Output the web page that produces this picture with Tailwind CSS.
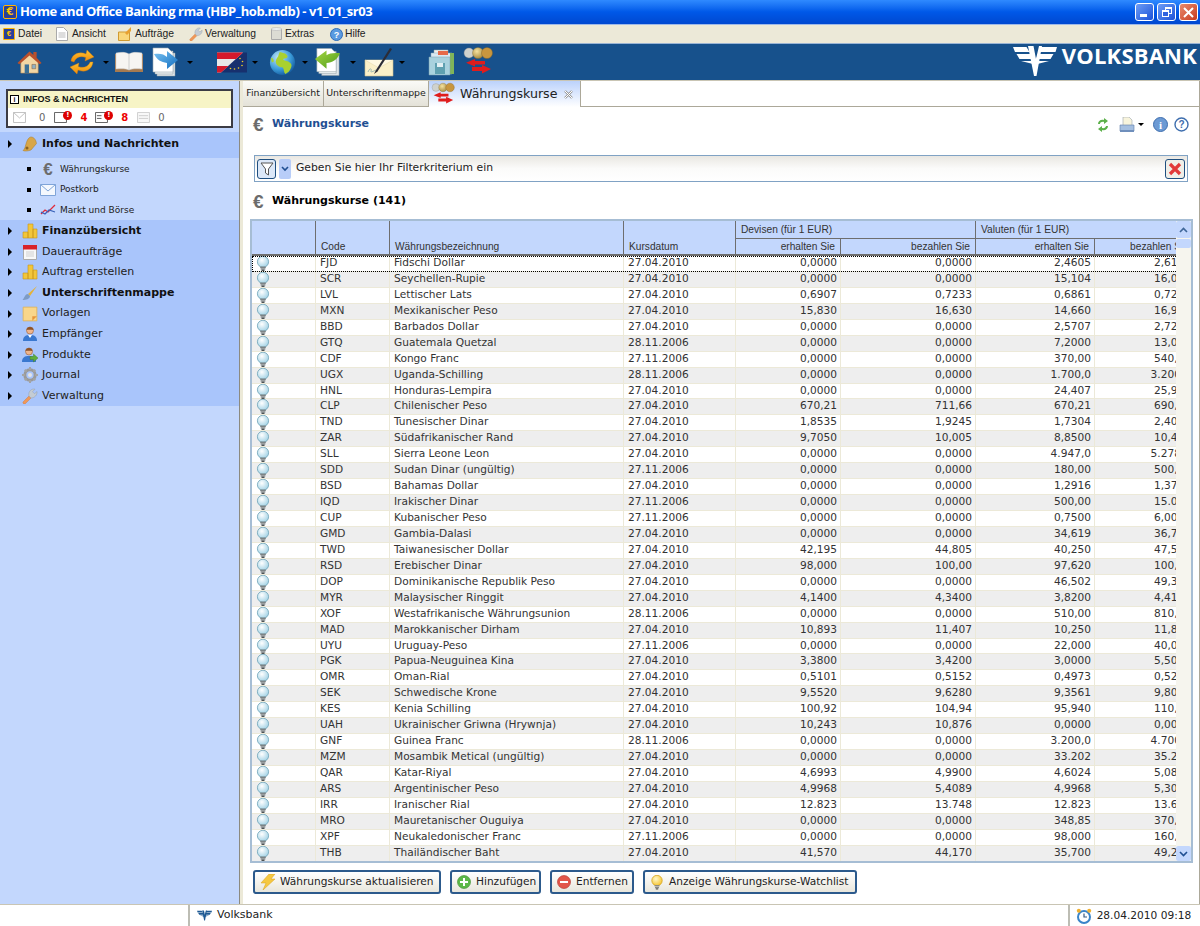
<!DOCTYPE html>
<html lang="de">
<head>
    <meta charset="UTF-8">
    <title>Home and Office Banking rma</title>
    <script src="https://cdn.jsdelivr.net/npm/@tailwindcss/browser@4"></script>
</head>
<body class="w-[1200px] h-[926px] overflow-hidden bg-white font-['DejaVu_Sans',sans-serif] text-[11px] text-[#222]">

    <!-- Icon sprites -->
    <svg class="absolute w-0 h-0" xmlns="http://www.w3.org/2000/svg">
        <defs>
            <linearGradient id="gOrange" x1="0" y1="0" x2="0" y2="1"><stop offset="0" stop-color="#ffc531"/><stop offset="1" stop-color="#ee8a0c"/></linearGradient>
            <linearGradient id="gBlue" x1="0" y1="0" x2="1" y2="1"><stop offset="0" stop-color="#7cc4f2"/><stop offset="1" stop-color="#0f6cc0"/></linearGradient>
            <linearGradient id="gGreen" x1="0" y1="0" x2="1" y2="1"><stop offset="0" stop-color="#a5d640"/><stop offset="1" stop-color="#4d9c1c"/></linearGradient>
            <radialGradient id="gGlobe" cx=".35" cy=".3" r=".8"><stop offset="0" stop-color="#c4e8f6"/><stop offset=".6" stop-color="#3a9ad8"/><stop offset="1" stop-color="#0e4f92"/></radialGradient>
            <radialGradient id="gBulb" cx=".4" cy=".35" r=".7"><stop offset="0" stop-color="#ffffff"/><stop offset="1" stop-color="#9ed0e4"/></radialGradient>
            <radialGradient id="gBulbY" cx=".4" cy=".35" r=".7"><stop offset="0" stop-color="#fff8c8"/><stop offset="1" stop-color="#f5c22a"/></radialGradient>
            <radialGradient id="gCoin" cx=".4" cy=".35" r=".7"><stop offset="0" stop-color="#f4e2a0"/><stop offset="1" stop-color="#a98a3c"/></radialGradient>
        </defs>
        <symbol id="i-bulb" viewBox="0 0 14 15">
            <circle cx="7" cy="5.800" r="5.600" fill="url(#gBulb)" stroke="#6fa3b8" stroke-width=".8"/>
            <path d="M4.200 10.500h5.600v1.600H4.200zM4.600 12.200h4.800v1.300H4.600z" fill="#7d8486"/><path d="M5.500 13.500h3V15h-3z" fill="#4d5254"/>
        </symbol>
        <symbol id="i-bulby" viewBox="0 0 14 15">
            <circle cx="7" cy="5.500" r="5.200" fill="url(#gBulbY)" stroke="#d6a520" stroke-width=".8"/>
            <path d="M4.600 10h4.800v1.600H4.600zM5 12h4v1.300H5z" fill="#8b8b86"/><path d="M5.800 13.300h2.400v1.200H5.800z" fill="#55554f"/>
        </symbol>
        <symbol id="i-house" viewBox="0 0 28 28">
            <path d="M5 13v12h18V13L14 5z" fill="#f2d6a4" stroke="#b88a52" stroke-width=".6"/>
            <path d="M1.500 14.500 14 2.500l4 3.600V3h3.400v6.200l5.100 5.300-2 1.300L14 6.800 3.500 15.800z" fill="#b8502c"/>
            <path d="M9 16h4.500v9H9z" fill="#3a6f96"/><path d="M16.500 16h4v4.500h-4z" fill="#8fb0c4" stroke="#80552e" stroke-width=".5"/>
        </symbol>
        <symbol id="i-sync" viewBox="0 0 28 28">
            <path d="M3 13C4 6 11 3 18 6l1-4 7 7-9 4 .8-3.500C13 7.500 8 9 6 14z" fill="url(#gOrange)" stroke="#d97a08" stroke-width=".4"/>
            <path d="M25 14c-1 8-8 11-15 8l-1 4-7-7 9-4-.8 3.500c5 2 10 .500 12-4.500z" fill="url(#gOrange)" stroke="#d97a08" stroke-width=".4"/>
        </symbol>
        <symbol id="i-book" viewBox="0 0 30 22">
            <path d="M1 3h28v18H1z" fill="#a67a50"/>
            <path d="M2 2c5-1 10-1 13 1v16c-3-1.500-8-1.500-13-1zM28 2c-5-1-10-1-13 1v16c3-1.500 8-1.500 13-1z" fill="#f7f5f2" stroke="#c9c9c9" stroke-width=".5"/>
        </symbol>
        <symbol id="i-docblue" viewBox="0 0 28 30">
            <path d="M5 6h18v23H5z" fill="#dfe6ea" stroke="#8d999f" stroke-width=".5"/><path d="M3 4h18v23H3z" fill="#eef2f4" stroke="#8d999f" stroke-width=".5"/>
            <path d="M1 1h15l5 5v19H1z" fill="#fff" stroke="#9aa8ae" stroke-width=".6"/>
            <path d="M2 7c6-1 10 0 13 3V4l11 9-11 9v-6c-6-1-10-3-13-9z" fill="url(#gBlue)"/>
        </symbol>
        <symbol id="i-docgreen" viewBox="0 0 28 30">
            <path d="M8 6h18v23H8z" fill="#dfe6ea" stroke="#8d999f" stroke-width=".5"/><path d="M5 4h18v23H5z" fill="#eef2f4" stroke="#8d999f" stroke-width=".5"/>
            <path d="M3 1h15l5 5v19H3z" fill="#fff" stroke="#9aa8ae" stroke-width=".6"/>
            <path d="M27 6c-6-1-11 0-14 2V3L1 12l12 10v-6c6 0 11-3 14-10z" fill="url(#gGreen)"/>
        </symbol>
        <symbol id="i-flag" viewBox="0 0 30 20">
            <path d="M0 0h30v20H0z" fill="#17306e"/>
            <path d="M0 0h26L4 20H0z" fill="#e8e8e8"/><path d="M0 0h26l-7 6.500H0zM0 13.500h11.500L4 20H0z" fill="#d41a2c"/>
            <g fill="#f2d024"><circle cx="23" cy="6" r=".8"/><circle cx="25.500" cy="9" r=".8"/><circle cx="25" cy="13" r=".8"/><circle cx="21.500" cy="15.500" r=".8"/><circle cx="17.500" cy="16.500" r=".8"/><circle cx="13.500" cy="16" r=".8"/></g>
        </symbol>
        <symbol id="i-globe" viewBox="0 0 28 28">
            <circle cx="14" cy="14" r="13" fill="url(#gGlobe)"/>
            <path d="M11 3c3 1 7 1 8 4 1 2-2 3-4 3-1 2 3 2 5 3 3 2 4 3 3 6-1 4-4 6-6 7-2-2-1-5-3-7-3 0-7-2-7-6 0-3 3-5 3-7zM2 9c2 0 3 2 3 4l-2 1z" fill="#a9d12f"/>
        </symbol>
        <symbol id="i-sign" viewBox="0 0 30 30">
            <path d="M1 13h28v16H1z" fill="#fbf0c8" stroke="#cdbf8f" stroke-width=".6"/><path d="M1 13l14 8 14-8" fill="#fff8e0" stroke="#e2d5a8" stroke-width=".5"/>
            <path d="M4 25c2-5 4-3 3-1s3 0 5-1" fill="none" stroke="#8aa" stroke-width=".8"/>
            <path d="M26 1 12 23l-2 4 3.500-2.500L28 2z" fill="#2c2c36"/>
        </symbol>
        <symbol id="i-mail" viewBox="0 0 27 28">
            <path d="M6 2h14v22H6z" fill="#f2f2ee" stroke="#9aa" stroke-width=".5"/><path d="M3 5h21v21H3z" fill="#d9e9f2" stroke="#8fa8b8" stroke-width=".5"/>
            <path d="M22 5h4v21h-4z" fill="#7fb45a"/><path d="M10 3h10v4H10z" fill="#e66a4a"/>
            <path d="M1 9h21v18H1z" fill="#a9d2de" stroke="#7a9cac" stroke-width=".5"/>
            <path d="M7 15h10v11H7z" fill="#5fa0b0"/><path d="M9 15h6v4H9z" fill="#e2f0f4"/>
        </symbol>
        <symbol id="i-coins" viewBox="0 0 30 32">
            <circle cx="6" cy="7" r="5" fill="#cfd2ce" stroke="#888" stroke-width=".4"/><circle cx="15" cy="7" r="5.500" fill="url(#gCoin)" stroke="#7f6b34" stroke-width=".4"/><circle cx="24" cy="7" r="5.500" fill="#c8963e" stroke="#7b5a20" stroke-width=".4"/>
            <path d="M12 13v2h10v3.500H12v2L3 16.800z" fill="#e01c1c"/><path d="M19 19v2H9v4h10v2.500l9-4.500z" fill="#e01c1c"/>
        </symbol>
        <symbol id="i-env" viewBox="0 0 16 12">
            <path d="M.5.500h15v11H.5z" fill="#f4f8fe" stroke="#7fa4d8"/><path d="M.5.500 8 7 15.500.500" fill="none" stroke="#7fa4d8"/>
        </symbol>
        <symbol id="i-chart" viewBox="0 0 16 12">
            <path d="M1 10 5 6l3 2 7-7" fill="none" stroke="#e02a3a" stroke-width="1.300"/><path d="M1 8l4 2 4-4 6 2" fill="none" stroke="#3a62b8" stroke-width="1.200"/>
        </symbol>
        <symbol id="i-bars" viewBox="0 0 16 16">
            <path d="M1 9h5v6H1zM6 1h5v14H6zM11 6h4v9h-4z" fill="#f2c63a" stroke="#c8961a" stroke-width=".6"/>
        </symbol>
        <symbol id="i-cal" viewBox="0 0 14 16">
            <path d="M.5 2h13v13.500H.5z" fill="#f8f8f8" stroke="#aaa"/><path d="M0 1h14v4.500H0z" fill="#d8232a"/><path d="M3 7h8v6H3z" fill="#e4e4e4"/>
        </symbol>
        <symbol id="i-brush" viewBox="0 0 16 16">
            <path d="M15 1 6 9l2 2z" fill="#e3b23a"/><path d="M6 9c-3 0-3 3-5.500 6C4 15 8 14 8 11z" fill="#7d9bc4"/>
        </symbol>
        <symbol id="i-note" viewBox="0 0 14 14">
            <path d="M1 1h12v12H1z" fill="#f9d68a" stroke="#e0b050" stroke-width=".7"/><path d="M9 13l4-4H9z" fill="#e8963a"/>
        </symbol>
        <symbol id="i-person" viewBox="0 0 16 16">
            <circle cx="8" cy="4.500" r="3.500" fill="#eeb48c" stroke="#9a5c30" stroke-width=".6"/><path d="M8 1a3.500 3.500 0 0 1 3.500 3c-2 0-5-.5-7 0A3.500 3.500 0 0 1 8 1z" fill="#8c5228"/>
            <path d="M1 15c0-5 3-6 7-6s7 1 7 6z" fill="#3a78d0"/><path d="M6 9l2 3 2-3z" fill="#fff"/>
        </symbol>
        <symbol id="i-person2" viewBox="0 0 16 16">
            <circle cx="7" cy="4.500" r="3.500" fill="#eeb48c" stroke="#9a5c30" stroke-width=".6"/><path d="M7 1a3.500 3.500 0 0 1 3.500 3c-2 0-5-.5-7 0A3.500 3.500 0 0 1 7 1z" fill="#8c5228"/>
            <path d="M0 15c0-5 3-6 7-6s7 1 7 6z" fill="#3a78d0"/><path d="M8 9.500h3.500V7l4.500 4-4.500 4v-2.500H8z" fill="#5fae3c" stroke="#3c7a22" stroke-width=".4"/>
        </symbol>
        <symbol id="i-gear" viewBox="0 0 16 16">
            <circle cx="8" cy="8" r="5.200" fill="none" stroke="#9a9a9a" stroke-width="3"/>
            <path d="M7 0h2v3H7zM7 13h2v3H7zM0 7h3v2H0zM13 7h3v2h-3zM2 3.400 3.400 2l2 2L4 5.400zM10.600 12l1.400-1.400 2 2L12.600 14zM12.600 2 14 3.400l-2 2L10.600 4zM2 12.600l2-2L5.400 12l-2 2z" fill="#a4a4a4"/>
            <circle cx="8" cy="8" r="2" fill="#e4e4e4"/>
        </symbol>
        <symbol id="i-wrench" viewBox="0 0 16 16">
            <path d="M1 14 7 8l2 2-6 6c-1 .5-2.500-1-2-2z" fill="#f09858" stroke="#d27230" stroke-width=".4"/>
            <path d="M7 8c-1-3 1-7 5-7l1 .2-2.500 2.500 2 2L15 3.500c.5 3.500-2.500 6.500-6 6.500z" fill="#c4ccd4" stroke="#8a96a0" stroke-width=".4"/>
        </symbol>
        <symbol id="i-bell" viewBox="0 0 16 16">
            <path d="M9 1c3 0 5 3 5.500 6.500L9 14c-3 1-6 1.500-8 .5C3 13 3 11 4 8c1-4 3-7 5-7z" fill="#d8a648" stroke="#a87a24" stroke-width=".5"/><circle cx="5" cy="12" r="1.500" fill="#8a6220"/>
        </symbol>
        <symbol id="i-bolt" viewBox="0 0 16 16"><path d="M9 0h6l-4 5h4L3 16l3-7H1z" fill="#f5c842" stroke="#dba21e" stroke-width=".5"/></symbol>
        <symbol id="i-plus" viewBox="0 0 14 14"><circle cx="7" cy="7" r="6.500" fill="#5cb848" stroke="#3a8c2c" stroke-width=".6"/><path d="M6 3h2v3h3v2H8v3H6V8H3V6h3z" fill="#fff"/></symbol>
        <symbol id="i-minus" viewBox="0 0 14 14"><circle cx="7" cy="7" r="6.500" fill="#e2564a" stroke="#b03028" stroke-width=".6"/><path d="M3 6h8v2H3z" fill="#fff"/></symbol>
        <symbol id="i-refresh" viewBox="0 0 12 14">
            <path d="M1 6c0-3 3-5 6-4V0l4 3-4 3V4C5 3.500 3 4.500 3 6z" fill="#5cb04a"/><path d="M11 8c0 3-3 5-6 4v2L1 11l4-3v2c2 .5 4-.5 4-2z" fill="#5cb04a"/>
        </symbol>
        <symbol id="i-print" viewBox="0 0 16 16">
            <path d="M4 0h6l3 3v6H4z" fill="#f8f4dc" stroke="#9aa4b0" stroke-width=".6"/><path d="M1 8h14v6H1z" fill="#a5bfe0" stroke="#5f7ea8" stroke-width=".6"/><path d="M1 13h14v2H1z" fill="#6f8fbc"/>
        </symbol>
        <symbol id="i-logo" viewBox="0 0 44 32">
            <path d="M0 2h13.500l3 5H2zM3.500 9h14l2.500 5H6.500zM8 16h12.500l1.500 3.500zM44 2H27.500L25 7h17.500zM40.500 9H25l-2 5h14.500zM36 16H24l-1.500 3.500z" fill="currentColor"/>
            <path d="M15 1h5.500l2.500 13 3-13h3L23.500 31h-2.500z" fill="currentColor"/>
        </symbol>
        <symbol id="i-clock" viewBox="0 0 16 16">
            <circle cx="8" cy="9" r="6" fill="#fff" stroke="#3a84c8" stroke-width="2"/><path d="M8 5.500V9h3" fill="none" stroke="#3a5a80" stroke-width="1.200"/>
            <circle cx="2.800" cy="2.800" r="2" fill="#f0b030"/><circle cx="13.200" cy="2.800" r="2" fill="#f0b030"/>
        </symbol>
        <symbol id="i-ml" viewBox="0 0 14 12"><path d="M.5.500h13v11H.5z" fill="#fff" stroke="#bbb"/><path d="M.5.500 7 6.500 13.500.500" fill="none" stroke="#bbb"/></symbol>
    </svg>

    <!-- Title bar -->
    <header class="h-[24px] flex items-center pl-[3px] pr-[2px] bg-gradient-to-b from-[#2f8aff] via-[#0058e8] to-[#0048d0]">
        <div class="w-[14px] h-[14px] rounded-[2px] bg-[#2a3f9a] border border-[#ffb400] text-[#ffc400] text-[10px] leading-[12px] text-center font-bold">€</div>
        <h1 class="ml-[3px] font-['Open_Sans',sans-serif] text-[13px] font-bold tracking-[-0.430px] text-white">Home and Office Banking rma (HBP_hob.mdb) - v1_01_sr03</h1>
        <div class="ml-auto flex gap-[3px]">
            <div class="w-[19px] h-[18px] rounded-[3px] border border-white bg-gradient-to-br from-[#6e9cf5] to-[#1c50d8] flex items-end pl-[4px] pb-[3px]"><div class="w-[7px] h-[3px] bg-white"></div></div>
            <div class="w-[19px] h-[18px] rounded-[3px] border border-white bg-gradient-to-br from-[#6e9cf5] to-[#1c50d8] relative">
                <div class="absolute left-[7px] top-[3px] w-[7px] h-[7px] border border-white border-t-2"></div>
                <div class="absolute left-[4px] top-[6px] w-[7px] h-[7px] border border-white border-t-2 bg-[#2f62e0]"></div>
            </div>
            <div class="w-[19px] h-[18px] rounded-[3px] border border-white bg-gradient-to-br from-[#e88a6c] to-[#c8381a] flex items-center justify-center">
                <svg class="w-[11px] h-[11px]" viewBox="0 0 11 11"><path d="M1 1l9 9M10 1l-9 9" stroke="#fff" stroke-width="2"/></svg>
            </div>
        </div>
    </header>

    <!-- Menu -->
    <nav class="h-[19px] bg-[#ece9d8] flex items-center pl-[3px] font-['Liberation_Sans',sans-serif] text-[10.300px] text-[#222] border-t border-[#9fb9e8]">
        <div class="w-[53px] flex items-center">
            <div class="w-[12px] h-[12px] rounded-[1px] bg-[#2a3f9a] border border-[#ffb400] text-[#ffc400] text-[8px] leading-[10px] text-center font-bold">€</div>
            <span class="ml-[3px]">Datei</span>
        </div>
        <div class="w-[62px] flex items-center">
            <svg class="w-[12px] h-[14px]" viewBox="0 0 12 14"><path d="M.5.500h7l4 4v9H.5z" fill="#fff" stroke="#aaa"/><path d="M2.500 6h7M2.500 8h7M2.500 10h7" stroke="#bbb"/></svg>
            <span class="ml-[4px]">Ansicht</span>
        </div>
        <div class="w-[71px] flex items-center">
            <svg class="w-[14px] h-[14px]" viewBox="0 0 14 14"><path d="M.5 5h11v8.500H.5z" fill="#f9d67a" stroke="#d09a30"/><path d="M7 6 13 0v4l-4 4z" fill="#e8a030"/></svg>
            <span class="ml-[3px]">Aufträge</span>
        </div>
        <div class="w-[82px] flex items-center">
            <svg class="w-[14px] h-[14px]"><use href="#i-wrench"/></svg>
            <span class="ml-[2px]">Verwaltung</span>
        </div>
        <div class="w-[59px] flex items-center">
            <svg class="w-[11px] h-[14px]" viewBox="0 0 11 14"><path d="M.5 2h10v10.500H.5z" fill="#dcdcd4" stroke="#aaa"/><ellipse cx="5.500" cy="2" rx="5" ry="1.500" fill="#eee" stroke="#aaa" stroke-width=".5"/></svg>
            <span class="ml-[3px]">Extras</span>
        </div>
        <div class="flex items-center">
            <svg class="w-[13px] h-[13px]" viewBox="0 0 13 13"><circle cx="6.500" cy="6.500" r="6" fill="#5a9ae0" stroke="#2f6cb8"/><text x="6.500" y="10" text-anchor="middle" font-size="9" font-weight="bold" fill="#fff" font-family="Liberation Sans">?</text></svg>
            <span class="ml-[2px]">Hilfe</span>
        </div>
    </nav>

    <!-- Toolbar -->
    <div class="h-[37px] bg-[#17518c] border-t border-[#9ab4d4] flex items-center text-white">
        <svg class="ml-[16px] w-[27px] h-[27px]"><use href="#i-house"/></svg>
        <svg class="ml-[25px] w-[28px] h-[28px]"><use href="#i-sync"/></svg>
        <div class="ml-[7px] border-x-[3px] border-t-[3px] border-x-transparent border-t-black"></div>
        <svg class="ml-[5px] w-[30px] h-[22px]"><use href="#i-book"/></svg>
        <svg class="ml-[8px] w-[28px] h-[30px]"><use href="#i-docblue"/></svg>
        <div class="ml-[7px] border-x-[3px] border-t-[3px] border-x-transparent border-t-black"></div>
        <svg class="ml-[24px] w-[30px] h-[21px]"><use href="#i-flag"/></svg>
        <div class="ml-[5px] border-x-[3px] border-t-[3px] border-x-transparent border-t-black"></div>
        <svg class="ml-[11px] w-[27px] h-[27px]"><use href="#i-globe"/></svg>
        <div class="ml-[6px] border-x-[3px] border-t-[3px] border-x-transparent border-t-black"></div>
        <svg class="ml-[6px] w-[27px] h-[30px]"><use href="#i-docgreen"/></svg>
        <div class="ml-[9px] border-x-[3px] border-t-[3px] border-x-transparent border-t-black"></div>
        <svg class="ml-[8px] w-[30px] h-[30px]"><use href="#i-sign"/></svg>
        <div class="ml-[5px] border-x-[3px] border-t-[3px] border-x-transparent border-t-black"></div>
        <svg class="ml-[23px] w-[27px] h-[28px]"><use href="#i-mail"/></svg>
        <svg class="ml-[8px] w-[30px] h-[32px]"><use href="#i-coins"/></svg>
        <div class="ml-auto mr-[3px] flex items-start h-full pt-[1px]">
            <svg class="w-[44px] h-[32px]"><use href="#i-logo"/></svg>
            <span class="ml-[5px] font-['Open_Sans',sans-serif] font-bold text-[22px] leading-[20px] tracking-[0.2px]">VOLKSBANK</span>
        </div>
    </div>

    <div class="h-[824px] flex bg-[#ece9d8] border-t border-[#c9c5b4]">

        <!-- Sidebar -->
        <aside class="w-[240px] bg-[#c3d7fd] border-r border-[#8c8a80] flex flex-col">
            <div class="mx-[6px] mt-[8px] w-[227px] h-[39px] border-2 border-[#3c3c44] bg-white">
                <div class="h-[17px] bg-[#f7f4c6] flex items-center pl-[2px] font-['Liberation_Sans',sans-serif] text-[9px] font-bold text-[#111]">
                    <div class="w-[9px] h-[9px] border border-black bg-white text-[7px] leading-[7px] text-center">i</div>
                    <span class="ml-[4px]">INFOS &amp; NACHRICHTEN</span>
                </div>
                <div class="h-[18px] flex items-center pl-[5px] text-[10px] relative">
                    <svg class="w-[13px] h-[11px]"><use href="#i-ml"/></svg>
                    <span class="ml-[13px] text-[#666]">0</span>
                    <svg class="ml-[9px] w-[13px] h-[11px]" viewBox="0 0 14 12"><path d="M.5.500h13v11H.5z" fill="#fff" stroke="#555"/></svg>
                    <div class="w-[9px] h-[9px] -ml-[4px] -mt-[4px] rounded-full bg-[#d00] text-white text-[7px] leading-[9px] text-center font-bold">!</div>
                    <span class="ml-[8px] text-[#e00] font-bold">4</span>
                    <svg class="ml-[8px] w-[13px] h-[11px]" viewBox="0 0 14 12"><path d="M.5.500h13v11H.5z" fill="#fff" stroke="#555"/><path d="M2 4h5M2 7h5" stroke="#555"/></svg>
                    <div class="w-[9px] h-[9px] -ml-[4px] -mt-[4px] rounded-full bg-[#d00] text-white text-[7px] leading-[9px] text-center font-bold">!</div>
                    <span class="ml-[8px] text-[#e00] font-bold">8</span>
                    <svg class="ml-[9px] w-[13px] h-[11px]" viewBox="0 0 14 12"><path d="M.5.500h13v11H.5z" fill="#f8f8f8" stroke="#ccc"/><path d="M2 4h10M2 7h10" stroke="#ccc"/></svg>
                    <span class="ml-[8px] text-[#666]">0</span>
                </div>
            </div>
            <div id="side-top" class="mt-[4px] h-[26px] pb-[2px] bg-[#a9c5fb] flex items-center"></div>
            <div id="side-sub" class="h-[62px] pt-[1px]"></div>
            <div id="side-main" class="h-[186px] pt-[1px] bg-[#a9c5fb]"></div>
        </aside>

        <!-- Content -->
        <main class="w-[956px] ml-[3px] flex flex-col bg-white">
            <!-- Tabs -->
            <div class="h-[26px] flex items-end border-b border-[#aca899] shrink-0">
                <div class="h-[25px] w-[81px] flex items-center justify-center bg-gradient-to-b from-[#fafaf7] to-[#e4e2d8] border-r border-[#aca899] text-[9.400px]">Finanzübersicht</div>
                <div class="h-[25px] w-[105px] flex items-center justify-center bg-gradient-to-b from-[#fafaf7] to-[#e4e2d8] border-r border-[#aca899] text-[9.400px]">Unterschriftenmappe</div>
                <div class="h-[26px] w-[152px] -mb-px flex items-center pl-[2px] bg-gradient-to-b from-[#bcd2fb] to-white border-r border-[#aca899]">
                    <svg class="w-[24px] h-[25px]"><use href="#i-coins"/></svg>
                    <span class="ml-[5px] text-[12.600px] text-[#222]">Währungskurse</span>
                    <svg class="ml-[6px] w-[11px] h-[11px]" viewBox="0 0 11 11"><path d="M2 2l7 7M9 2l-7 7" stroke="#999" stroke-width="2.400"/><path d="M2 2l7 7M9 2l-7 7" stroke="#fff" stroke-width="1"/></svg>
                </div>
            </div>

            <!-- Heading -->
            <div class="h-[35px] flex items-center shrink-0 pl-[10px] pr-[10px]">
                <span class="w-[19px] font-['Liberation_Sans',sans-serif] text-[19px] font-bold text-[#6c6c6c] leading-none">€</span>
                <h2 class="font-bold text-[#1f4f92]">Währungskurse</h2>
                <svg class="ml-auto w-[12px] h-[14px]"><use href="#i-refresh"/></svg>
                <svg class="ml-[10px] w-[16px] h-[16px]"><use href="#i-print"/></svg>
                <div class="ml-[3px] border-x-[3px] border-t-[3px] border-x-transparent border-t-black"></div>
                <svg class="ml-[9px] w-[15px] h-[15px]" viewBox="0 0 15 15"><circle cx="7.500" cy="7.500" r="7" fill="#6c9ad4" stroke="#3e6eae"/><text x="7.500" y="11.500" text-anchor="middle" font-size="11" font-weight="bold" fill="#fff" font-family="Liberation Serif">i</text></svg>
                <svg class="ml-[6px] w-[15px] h-[15px]" viewBox="0 0 15 15"><circle cx="7.500" cy="7.500" r="6.500" fill="#fff" stroke="#3e6eae" stroke-width="1.400"/><text x="7.500" y="11" text-anchor="middle" font-size="10" font-weight="bold" fill="#3e6eae" font-family="Liberation Sans">?</text></svg>
            </div>

            <!-- Filter -->
            <div class="ml-[11px] mt-[13px] w-[934px] h-[27px] shrink-0 border border-[#80a2c4] bg-gradient-to-b from-[#e9e7e2] via-[#fbfbfa] to-white flex items-center pl-[2px] pr-[2px]">
                <div class="w-[19px] h-[20px] rounded-[3px] border border-[#1f4f80] bg-[#dce8f8] flex items-center justify-center">
                    <svg class="w-[14px] h-[14px]" viewBox="0 0 14 14"><path d="M1 1h12L8.500 7v6l-3-2V7z" fill="#fff" stroke="#555"/></svg>
                </div>
                <div class="ml-[3px] w-[12px] h-[20px] rounded-[2px] bg-[#b8cdf8] flex items-center justify-center">
                    <svg class="w-[8px] h-[6px]" viewBox="0 0 8 6"><path d="M1 1l3 3 3-3" fill="none" stroke="#1f4f92" stroke-width="1.600"/></svg>
                </div>
                <span class="ml-[5px] text-[10.800px]">Geben Sie hier Ihr Filterkriterium ein</span>
                <div class="ml-auto w-[20px] h-[20px] rounded-[3px] border border-[#1f4f80] bg-[#f0efe8] flex items-center justify-center">
                    <svg class="w-[14px] h-[14px]" viewBox="0 0 14 14"><path d="M2 2l10 10M12 2 2 12" stroke="#e23a3a" stroke-width="3.200"/></svg>
                </div>
            </div>

            <!-- Section title -->
            <div class="h-[37px] pt-[2px] flex items-center shrink-0 pl-[10px]">
                <span class="w-[19px] font-['Liberation_Sans',sans-serif] text-[19px] font-bold text-[#6c6c6c] leading-none">€</span>
                <h3 class="font-bold text-black">Währungskurse (141)</h3>
            </div>

            <!-- Table -->
            <div class="ml-[7px] w-[943px] h-[644px] shrink-0 border-2 border-[#a6bdd4] relative flex">
                <div class="w-[924px] overflow-hidden">
                    <div class="w-[942px] h-[35px] relative grid grid-cols-[64px_74px_234px_112px_105px_135px_119px_99px] grid-rows-[18px_17px] bg-[#c3d7fd] font-['Liberation_Sans',sans-serif] text-[10.200px] text-[#333]">
                        <div class="row-span-2 border-r border-[#6e6e6e] border-b-2"></div>
                        <div class="row-span-2 border-r border-[#6e6e6e] border-b-2 flex items-end pl-[5px]">Code</div>
                        <div class="row-span-2 border-r border-[#6e6e6e] border-b-2 flex items-end pl-[5px]">Währungsbezeichnung</div>
                        <div class="row-span-2 border-r border-[#6e6e6e] border-b-2 flex items-end pl-[5px]">Kursdatum</div>
                        <div class="col-span-2 border-r border-b border-[#6e6e6e] flex items-center pl-[5px]">Devisen (für 1 EUR)</div>
                        <div class="col-span-2 border-b border-[#6e6e6e] flex items-center pl-[5px]">Valuten (für 1 EUR)</div>
                        <div class="border-r border-b-2 border-[#6e6e6e] flex items-center justify-end pr-[5px]">erhalten Sie</div>
                        <div class="border-r border-b-2 border-[#6e6e6e] flex items-center justify-end pr-[5px]">bezahlen Sie</div>
                        <div class="border-r border-b-2 border-[#6e6e6e] flex items-center justify-end pr-[5px]">erhalten Sie</div>
                        <div class="border-b-2 border-[#6e6e6e] flex items-center justify-end pr-[5px]">bezahlen Sie</div>
                    </div>
                    <div id="rows" class="w-[942px]"></div>
                </div>
                <!-- Scrollbar -->
                <div class="w-[15px] h-full bg-[#f6f5ee] flex flex-col items-center justify-between">
                    <div class="w-full">
                        <div class="h-[17px] bg-[#c3d7fd] rounded-[2px] flex items-center justify-center"><svg class="w-[9px] h-[6px]" viewBox="0 0 9 6"><path d="M1 5l3.500-3.500L8 5" fill="none" stroke="#3e6698" stroke-width="1.600"/></svg></div>
                        <div class="mt-[1px] h-[9px] bg-[#c3d7fd] rounded-[2px]"></div>
                    </div>
                    <div class="w-full h-[15px] bg-[#c3d7fd] rounded-[2px] flex items-center justify-center"><svg class="w-[9px] h-[6px]" viewBox="0 0 9 6"><path d="M1 1l3.500 3.500L8 1" fill="none" stroke="#1f4f92" stroke-width="1.600"/></svg></div>
                </div>
            </div>

            <!-- Buttons -->
            <div class="ml-[10px] mt-[7px] flex gap-[9px] text-[10.600px] whitespace-nowrap">
                <button class="h-[24px] w-[188px] rounded-[3px] border-2 border-[#2c5a8c] bg-gradient-to-b from-white to-[#e8e6dc] flex items-center pl-[4px]"><svg class="w-[18px] h-[16px]"><use href="#i-bolt"/></svg><span class="ml-[3px]">Währungskurse aktualisieren</span></button>
                <button class="h-[24px] w-[91px] rounded-[3px] border-2 border-[#2c5a8c] bg-gradient-to-b from-white to-[#e8e6dc] flex items-center pl-[5px]"><svg class="w-[14px] h-[14px]"><use href="#i-plus"/></svg><span class="ml-[5px]">Hinzufügen</span></button>
                <button class="h-[24px] w-[84px] rounded-[3px] border-2 border-[#2c5a8c] bg-gradient-to-b from-white to-[#e8e6dc] flex items-center pl-[5px]"><svg class="w-[14px] h-[14px]"><use href="#i-minus"/></svg><span class="ml-[5px]">Entfernen</span></button>
                <button class="h-[24px] w-[214px] rounded-[3px] border-2 border-[#2c5a8c] bg-gradient-to-b from-white to-[#e8e6dc] flex items-center pl-[5px]"><svg class="w-[14px] h-[15px]"><use href="#i-bulby"/></svg><span class="ml-[5px]">Anzeige Währungskurse-Watchlist</span></button>
            </div>
        </main>
        <div class="w-px bg-[#aca899]"></div>
    </div>

    <!-- Status bar -->
    <footer class="h-[22px] flex items-center border-t border-[#c9c5b4] bg-white">
        <div class="w-[190px] h-full border-r-2 border-[#bdbdb4]"></div>
        <svg class="ml-[7px] w-[15px] h-[11px] text-[#1f5a94]"><use href="#i-logo"/></svg>
        <span class="ml-[5px]">Volksbank</span>
        <div class="ml-[795px] h-full border-l-2 border-[#bdbdb4]"></div>
        <svg class="ml-[6px] w-[16px] h-[16px]"><use href="#i-clock"/></svg>
        <span class="ml-[5px] text-[10.600px]">28.04.2010 09:18</span>
    </footer>

    <script>
        // sidebar entries: [label, icon, bold]
        const sideMain = [
            ['Finanzübersicht', 'i-bars', true],
            ['Daueraufträge', 'i-cal', false],
            ['Auftrag erstellen', 'i-bars', false],
            ['Unterschriftenmappe', 'i-brush', true],
            ['Vorlagen', 'i-note', false],
            ['Empfänger', 'i-person', false],
            ['Produkte', 'i-person2', false],
            ['Journal', 'i-gear', false],
            ['Verwaltung', 'i-wrench', false],
        ];

        function sideRow(label, icon, bold) {
            return `<div class="h-[20.600px] flex items-center pl-[8px]">
                <div class="border-y-[4px] border-l-[4px] border-y-transparent border-l-black"></div>
                <svg class="ml-[10px] w-[16px] h-[16px]"><use href="#${icon}"/></svg>
                <span class="ml-[4px] ${bold ? 'font-bold text-[#111]' : 'text-[#222]'}">${label}</span>
            </div>`;
        }

        document.getElementById('side-top').innerHTML = sideRow('Infos und Nachrichten', 'i-bell', true);
        document.getElementById('side-main').innerHTML = sideMain.map(r => sideRow(r[0], r[1], r[2])).join('');
        document.getElementById('side-sub').innerHTML = [
            ['Währungskurse', `<span class="font-['Liberation_Sans',sans-serif] text-[17px] font-bold text-[#6c6c6c] leading-none">€</span>`],
            ['Postkorb', '<svg class="w-[16px] h-[12px]"><use href="#i-env"/></svg>'],
            ['Markt und Börse', '<svg class="w-[16px] h-[12px]"><use href="#i-chart"/></svg>'],
        ].map(r => `<div class="h-[20.600px] flex items-center pl-[27px]">
            <div class="w-[4px] h-[4px] bg-black"></div>
            <div class="ml-[9px] w-[16px] flex items-center justify-center">${r[1]}</div>
            <span class="ml-[4px] text-[9px] text-[#222]">${r[0]}</span>
        </div>`).join('');

        // code, name, date, devisen erhalten, devisen bezahlen, valuten erhalten, valuten bezahlen
        const rates = [
            ['FJD','Fidschi Dollar','27.04.2010','0,0000','0,0000','2,4605','2,6105'],
            ['SCR','Seychellen-Rupie','27.04.2010','0,0000','0,0000','15,104','16,004'],
            ['LVL','Lettischer Lats','27.04.2010','0,6907','0,7233','0,6861','0,7261'],
            ['MXN','Mexikanischer Peso','27.04.2010','15,830','16,630','14,660','16,960'],
            ['BBD','Barbados Dollar','27.04.2010','0,0000','0,0000','2,5707','2,7207'],
            ['GTQ','Guatemala Quetzal','28.11.2006','0,0000','0,0000','7,2000','13,000'],
            ['CDF','Kongo Franc','27.11.2006','0,0000','0,0000','370,00','540,00'],
            ['UGX','Uganda-Schilling','28.11.2006','0,0000','0,0000','1.700,0','3.200,0'],
            ['HNL','Honduras-Lempira','27.04.2010','0,0000','0,0000','24,407','25,907'],
            ['CLP','Chilenischer Peso','27.04.2010','670,21','711,66','670,21','690,21'],
            ['TND','Tunesischer Dinar','27.04.2010','1,8535','1,9245','1,7304','2,4004'],
            ['ZAR','Südafrikanischer Rand','27.04.2010','9,7050','10,005','8,8500','10,400'],
            ['SLL','Sierra Leone Leon','27.04.2010','0,0000','0,0000','4.947,0','5.278,0'],
            ['SDD','Sudan Dinar (ungültig)','27.11.2006','0,0000','0,0000','180,00','500,00'],
            ['BSD','Bahamas Dollar','27.04.2010','0,0000','0,0000','1,2916','1,3716'],
            ['IQD','Irakischer Dinar','27.11.2006','0,0000','0,0000','500,00','15.000'],
            ['CUP','Kubanischer Peso','27.11.2006','0,0000','0,0000','0,7500','6,0000'],
            ['GMD','Gambia-Dalasi','27.04.2010','0,0000','0,0000','34,619','36,719'],
            ['TWD','Taiwanesischer Dollar','27.04.2010','42,195','44,805','40,250','47,550'],
            ['RSD','Erebischer Dinar','27.04.2010','98,000','100,00','97,620','100,62'],
            ['DOP','Dominikanische Republik Peso','27.04.2010','0,0000','0,0000','46,502','49,302'],
            ['MYR','Malaysischer Ringgit','27.04.2010','4,1400','4,3400','3,8200','4,4100'],
            ['XOF','Westafrikanische Währungsunion','28.11.2006','0,0000','0,0000','510,00','810,00'],
            ['MAD','Marokkanischer Dirham','27.04.2010','10,893','11,407','10,250','11,850'],
            ['UYU','Uruguay-Peso','27.11.2006','0,0000','0,0000','22,000','40,000'],
            ['PGK','Papua-Neuguinea Kina','27.04.2010','3,3800','3,4200','3,0000','5,5000'],
            ['OMR','Oman-Rial','27.04.2010','0,5101','0,5152','0,4973','0,5273'],
            ['SEK','Schwedische Krone','27.04.2010','9,5520','9,6280','9,3561','9,8061'],
            ['KES','Kenia Schilling','27.04.2010','100,92','104,94','95,940','110,94'],
            ['UAH','Ukrainischer Griwna (Hrywnja)','27.04.2010','10,243','10,876','0,0000','0,0000'],
            ['GNF','Guinea Franc','28.11.2006','0,0000','0,0000','3.200,0','4.700,0'],
            ['MZM','Mosambik Metical (ungültig)','27.04.2010','0,0000','0,0000','33.202','35.202'],
            ['QAR','Katar-Riyal','27.04.2010','4,6993','4,9900','4,6024','5,0824'],
            ['ARS','Argentinischer Peso','27.04.2010','4,9968','5,4089','4,9968','5,3068'],
            ['IRR','Iranischer Rial','27.04.2010','12.823','13.748','12.823','13.623'],
            ['MRO','Mauretanischer Ouguiya','27.04.2010','0,0000','0,0000','348,85','370,85'],
            ['XPF','Neukaledonischer Franc','27.11.2006','0,0000','0,0000','98,000','160,00'],
            ['THB','Thailändischer Baht','27.04.2010','41,570','44,170','35,700','49,200'],
        ];

        document.getElementById('rows').innerHTML = rates.map((r, i) => {
            const stripe = i % 2 ? 'bg-[#eeeeee]' : 'bg-white';
            const focus = i === 0 ? 'outline-1 outline-dotted outline-black -outline-offset-1' : '';
            return `<div class="h-[15.950px] grid grid-cols-[64px_74px_234px_112px_105px_135px_119px_99px] items-stretch leading-[13px] text-[10.600px] text-[#333] border-b border-[#ece9d8] ${stripe} ${focus}">
                <div class="border-r border-[#ece9d8] pl-[4px]"><svg class="w-[14px] h-[15px]"><use href="#i-bulb"/></svg></div>
                <div class="border-r border-[#ece9d8] pl-[4px]">${r[0]}</div>
                <div class="border-r border-[#ece9d8] pl-[4px] whitespace-nowrap">${r[1]}</div>
                <div class="border-r border-[#ece9d8] pl-[4px]">${r[2]}</div>
                <div class="border-r border-[#ece9d8] pr-[3px] text-right">${r[3]}</div>
                <div class="border-r border-[#ece9d8] pr-[3px] text-right">${r[4]}</div>
                <div class="border-r border-[#ece9d8] pr-[3px] text-right">${r[5]}</div>
                <div class="pr-[3px] text-right">${r[6]}</div>
            </div>`;
        }).join('');
    </script>
</body>
</html>
